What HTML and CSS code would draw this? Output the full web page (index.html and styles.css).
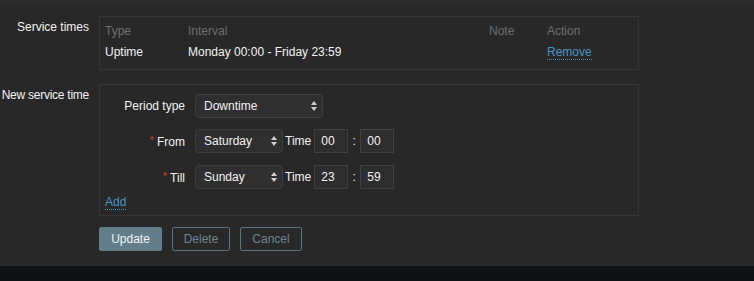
FILE: index.html
```html
<!DOCTYPE html>
<html lang="en">
  <head>
    <meta charset="UTF-8" />
    <meta name="viewport" content="width=device-width, initial-scale=1.0" />
    <title>Service times</title>
    <link rel="stylesheet" href="styles.css">
  </head>
  <body>
    <div class="page">
      <div class="form-grid">
        <label class="form-label">Service times</label>
        <div class="box times-box">
          <table class="times-table">
            <thead>
              <tr>
                <th class="col-type">Type</th>
                <th class="col-interval">Interval</th>
                <th class="col-note">Note</th>
                <th>Action</th>
              </tr>
            </thead>
            <tbody>
              <tr>
                <td>Uptime</td>
                <td>Monday 00:00 - Friday 23:59</td>
                <td></td>
                <td><a href="#" class="link">Remove</a></td>
              </tr>
            </tbody>
          </table>
        </div>

        <label class="form-label tight">New service time</label>
        <div class="box new-box">
          <div class="inner-grid">
            <label class="inner-label">Period type</label>
            <div class="field">
              <span class="select-wrap wide">
                <select><option>Downtime</option></select>
                <svg class="arrows" width="6" height="10" viewBox="0 0 6 10"><path d="M3 0L6 4H0z M3 10L6 6H0z" fill="#cfcfcf"/></svg>
              </span>
            </div>

            <label class="inner-label"><span class="req">*</span> From</label>
            <div class="field">
              <span class="select-wrap day">
                <select><option>Saturday</option></select>
                <svg class="arrows" width="6" height="10" viewBox="0 0 6 10"><path d="M3 0L6 4H0z M3 10L6 6H0z" fill="#cfcfcf"/></svg>
              </span>
              <span class="time-label">Time</span>
              <input class="time" value="00" />
              <span class="colon">:</span>
              <input class="time" value="00" />
            </div>

            <label class="inner-label"><span class="req">*</span> Till</label>
            <div class="field">
              <span class="select-wrap day">
                <select><option>Sunday</option></select>
                <svg class="arrows" width="6" height="10" viewBox="0 0 6 10"><path d="M3 0L6 4H0z M3 10L6 6H0z" fill="#cfcfcf"/></svg>
              </span>
              <span class="time-label">Time</span>
              <input class="time" value="23" />
              <span class="colon">:</span>
              <input class="time" value="59" />
            </div>
          </div>
          <a href="#" class="link add-link">Add</a>
        </div>

        <div></div>
        <div class="buttons">
          <button class="btn update">Update</button>
          <button class="btn btn-alt delete">Delete</button>
          <button class="btn btn-alt cancel">Cancel</button>
        </div>
      </div>
    </div>
  </body>
</html>
```

FILE: styles.css
```css
* {
  margin: 0;
  padding: 0;
  box-sizing: border-box;
}
body {
  background-color: #0f1113;
  font-family: "Liberation Sans", Arial, sans-serif;
  font-size: 12px;
  color: #f2f2f2;
}
.page {
  background-color: #282828;
  border-top: 3px solid #2c2c2c;
  padding: 13px 0 16px;
  height: 266px;
}
.form-grid {
  display: grid;
  grid-template-columns: 89px 540px;
  column-gap: 10px;
  row-gap: 14px;
}
.form-label {
  display: flex;
  justify-content: flex-end;
  line-height: 22px;
  white-space: nowrap;
}
.form-label.tight {
  letter-spacing: -0.25px;
}
.box {
  border: 1px solid #363636;
}
.times-box {
  padding: 3px 5px 7px;
}
.times-table {
  border-collapse: collapse;
}
.times-table th,
.times-table td {
  text-align: left;
  height: 21px;
  padding: 0;
  font-weight: normal;
  white-space: nowrap;
}
.times-table th {
  color: #6e6e6e;
}
.col-type {
  width: 83px;
}
.col-interval {
  width: 301px;
}
.col-note {
  width: 58px;
}
.link {
  color: #4796c4;
  text-decoration: none;
  border-bottom: 1px dotted #4796c4;
}
.new-box {
  padding: 9px 5px 5px;
}
.inner-grid {
  display: grid;
  grid-template-columns: 80px auto;
  column-gap: 10px;
  row-gap: 11px;
  margin-bottom: 5px;
}
.inner-label {
  text-align: right;
  line-height: 24px;
  white-space: nowrap;
}
.req {
  color: #e33734;
  font-size: 10px;
  vertical-align: 2px;
}
.field {
  display: flex;
  align-items: center;
  height: 24px;
}
.select-wrap {
  position: relative;
  display: inline-block;
  height: 24px;
}
.select-wrap select {
  appearance: none;
  -webkit-appearance: none;
  width: 100%;
  height: 24px;
  background-color: #2f2f2f;
  border: 1px solid #3f3f3f;
  border-radius: 4px;
  color: #f2f2f2;
  font-family: inherit;
  font-size: 12px;
  padding: 0 16px 0 8px;
  outline: none;
}
.select-wrap.wide {
  width: 128px;
}
.select-wrap.day {
  width: 88px;
}
.arrows {
  position: absolute;
  right: 6px;
  top: 7px;
  pointer-events: none;
}
.time-label {
  margin: 0 3px 0 2px;
}
.time {
  width: 34px;
  height: 24px;
  background-color: #2d2d2d;
  border: 1px solid #404040;
  color: #f2f2f2;
  font-family: inherit;
  font-size: 12px;
  padding: 0 6px;
  outline: none;
}
.colon {
  width: 12px;
  text-align: center;
}
.add-link {
  display: inline-block;
  line-height: 13px;
}
.buttons {
  display: flex;
  gap: 10px;
}
.form-grid > .buttons {
  margin-top: -3px;
}
.btn {
  height: 24px;
  padding: 0;
  font-family: inherit;
  font-size: 12px;
  border-radius: 2px;
  background-color: #627e8b;
  border: 1px solid #627e8b;
  color: #f2f2f2;
}
.btn-alt {
  background-color: transparent;
  border-color: #587480;
  color: #6c8591;
}
.update {
  width: 63px;
}
.delete {
  width: 58px;
}
.cancel {
  width: 62px;
}
```
